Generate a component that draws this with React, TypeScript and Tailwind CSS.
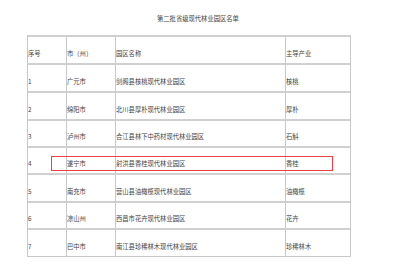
import React from "react";

const rows = [
  ["序号", "市（州）", "园区名称", "主导产业"],
  ["1", "广元市", "剑阁县核桃现代林业园区", "核桃"],
  ["2", "绵阳市", "北川县厚朴现代林业园区", "厚朴"],
  ["3", "泸州市", "合江县林下中药材现代林业园区", "石斛"],
  ["4", "遂宁市", "射洪县香桂现代林业园区", "香桂"],
  ["5", "南充市", "营山县油橄榄现代林业园区", "油橄榄"],
  ["6", "凉山州", "西昌市花卉现代林业园区", "花卉"],
  ["7", "巴中市", "南江县珍稀林木现代林业园区", "珍稀林木"],
];

const heights = [28, 28, 28, 27, 27, 28, 27, 28];
const widths = [39, 49, 170, 65];

export default function App() {
  return (
    <div
      className="relative w-[406px] h-[274px] bg-white text-[#444]"
      style={{ fontFamily: '"Noto Sans CJK SC", "Liberation Sans", sans-serif' }}
    >
      <div className="pt-[15px] pl-[157px] text-[6.3px] leading-[8px] h-[35px]">
        第二批省级现代林业园区名单
      </div>
      <div className="ml-[27px] w-[324px] border-r border-b border-[#c8c8c8]">
        {rows.map((r, i) => (
          <div key={i} className="flex" style={{ height: heights[i] }}>
            {r.map((c, j) => (
              <div
                key={j}
                className="flex items-end pb-[5px] border-l border-t-2 border-l-[#c8c8c8] border-t-[#d0d0d0] text-[6.3px] leading-[8px] whitespace-nowrap"
                style={{ width: widths[j] }}
              >
                {c}
              </div>
            ))}
          </div>
        ))}
      </div>
      <div className="absolute left-[51px] top-[156px] w-[282px] h-[15px] border-[1.5px] border-[#e8414a]" />
    </div>
  );
}
